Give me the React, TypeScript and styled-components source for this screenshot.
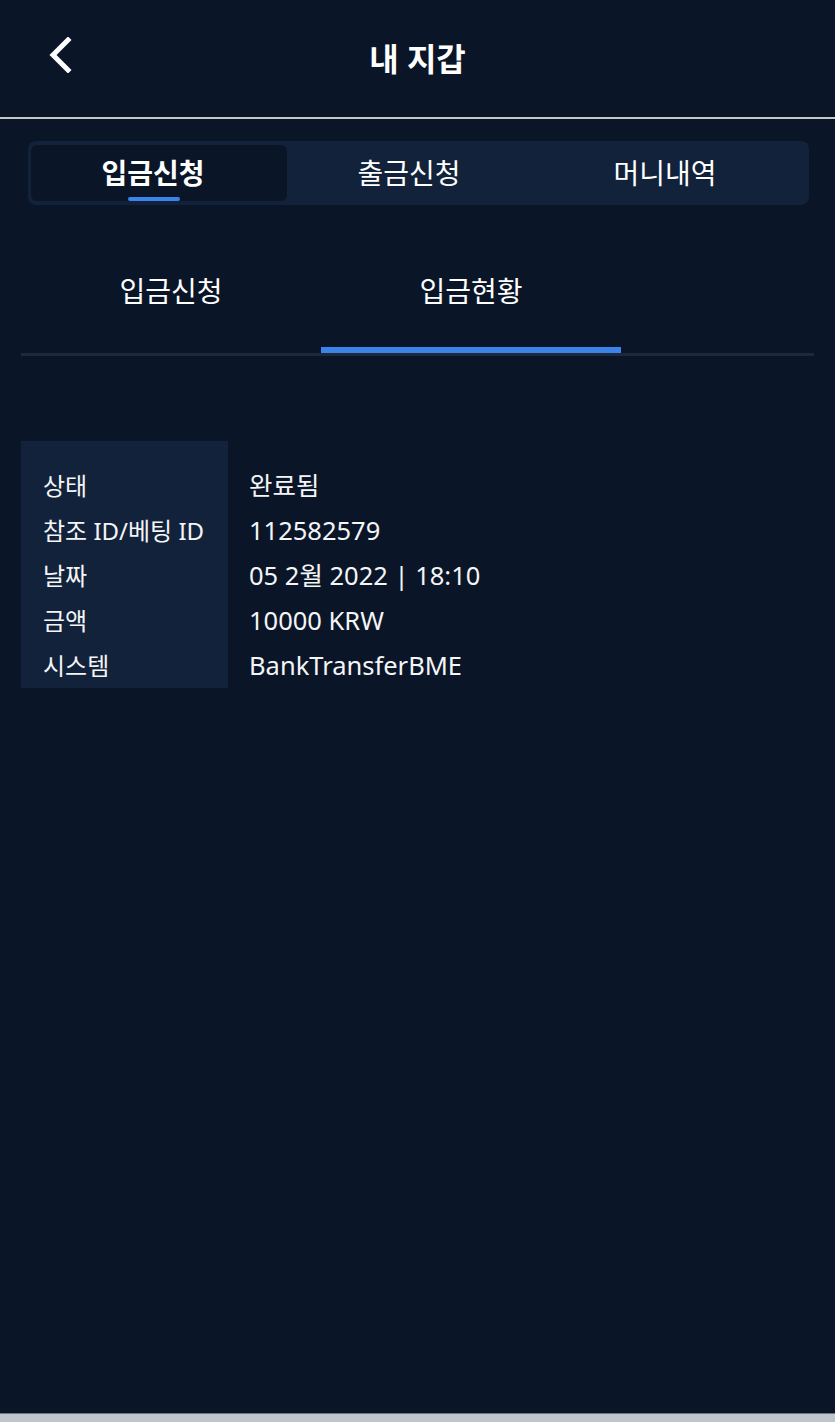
import React from "react";
import styled, { createGlobalStyle } from "styled-components";

const GlobalStyle = createGlobalStyle`
  html, body { margin: 0; padding: 0; background: #0a1628; }
  body {
    font-family: "Noto Sans", "Noto Sans CJK KR", sans-serif;
    color: #ffffff;
    -webkit-font-smoothing: antialiased;
  }
  * { box-sizing: border-box; }
`;

const Page = styled.div`
  min-height: 1422px;
  display: flex;
  flex-direction: column;
  background: #0a1628;
`;

const Main = styled.main`
  flex: 1;
  display: flex;
  flex-direction: column;
`;

const Header = styled.header`
  height: 119px;
  display: grid;
  grid-template-columns: 1fr auto 1fr;
  align-items: center;
  border-bottom: 2px solid #c3c7cc;
`;

const BackButton = styled.button`
  justify-self: start;
  margin-left: 44px;
  margin-top: -8px;
  padding: 4px;
  border: none;
  background: transparent;
  display: flex;
  cursor: pointer;
`;

const Title = styled.h1`
  margin: 0;
  font-size: 32px;
  font-weight: 700;
  line-height: 1;
  color: #ffffff;
`;

const SegmentBar = styled.nav`
  margin: 22px 26px 0 28px;
  height: 64px;
  padding: 4px 3px;
  display: flex;
  background: #12223b;
  border-radius: 8px;
`;

const Segment = styled.div<{ $active?: boolean }>`
  position: relative;
  flex: 0 0 256px;
  padding-right: 12px;
  display: flex;
  align-items: center;
  justify-content: center;
  border-radius: 6px;
  background: ${(p) => (p.$active ? "#0a1628" : "transparent")};
  font-size: 28px;
  font-weight: ${(p) => (p.$active ? 700 : 400)};
  color: #ffffff;
`;

const SegmentLabel = styled.span`
  line-height: 1;
  margin-top: -1px;
`;

const SegmentIndicator = styled.span`
  position: absolute;
  bottom: 0;
  left: 97px;
  width: 52px;
  height: 4px;
  border-radius: 2px;
  background: #3b84ea;
`;

const SubTabBar = styled.div`
  margin: 48px 21px 0 21px;
  display: flex;
  border-bottom: 3px solid #1d283a;
`;

const SubTab = styled.div<{ $active?: boolean }>`
  width: 300px;
  height: 100px;
  padding-bottom: 20px;
  display: flex;
  align-items: center;
  justify-content: center;
  font-size: 28px;
  font-weight: 400;
  color: #ffffff;
  border-bottom: 6px solid ${(p) => (p.$active ? "#3b84ea" : "transparent")};
`;

const Details = styled.section`
  margin: 85px 0 0 21px;
  display: flex;
  align-items: stretch;
`;

const LabelColumn = styled.div`
  width: 207px;
  padding: 22px 0 0 22px;
  background: #12223b;
  display: flex;
  flex-direction: column;
`;

const ValueColumn = styled.div`
  padding: 22px 0 0 21px;
  display: flex;
  flex-direction: column;
`;

const Cell = styled.div<{ $size: number }>`
  height: 45px;
  line-height: 45px;
  font-size: ${(p) => p.$size}px;
  color: #f4f5f7;
  white-space: nowrap;
`;

const BottomStrip = styled.div`
  height: 9px;
  background: #bec5cc;
  border-top: 1px solid #6b7683;
`;

const rows: [string, string][] = [
  ["상태", "완료됨"],
  ["참조 ID/베팅 ID", "112582579"],
  ["날짜", "05 2월 2022 | 18:10"],
  ["금액", "10000 KRW"],
  ["시스템", "BankTransferBME"],
];

const ChevronLeft = () => (
  <svg width="24" height="36" viewBox="0 0 24 36" fill="none">
    <polyline
      points="20,3 5,18 20,33"
      stroke="#ffffff"
      strokeWidth="5"
      strokeLinecap="square"
      strokeLinejoin="miter"
    />
  </svg>
);

export default function App() {
  return (
    <>
      <GlobalStyle />
      <Page>
        <Main>
          <Header>
            <BackButton aria-label="back">
              <ChevronLeft />
            </BackButton>
            <Title>내 지갑</Title>
            <span />
          </Header>

          <SegmentBar>
            <Segment $active>
              <SegmentLabel>입금신청</SegmentLabel>
              <SegmentIndicator />
            </Segment>
            <Segment>
              <SegmentLabel>출금신청</SegmentLabel>
            </Segment>
            <Segment>
              <SegmentLabel>머니내역</SegmentLabel>
            </Segment>
          </SegmentBar>

          <SubTabBar>
            <SubTab>입금신청</SubTab>
            <SubTab $active>입금현황</SubTab>
          </SubTabBar>

          <Details>
            <LabelColumn>
              {rows.map(([label]) => (
                <Cell key={label} $size={24}>
                  {label}
                </Cell>
              ))}
            </LabelColumn>
            <ValueColumn>
              {rows.map(([label, value]) => (
                <Cell key={label} $size={25.5}>
                  {value}
                </Cell>
              ))}
            </ValueColumn>
          </Details>
        </Main>
        <BottomStrip />
      </Page>
    </>
  );
}
